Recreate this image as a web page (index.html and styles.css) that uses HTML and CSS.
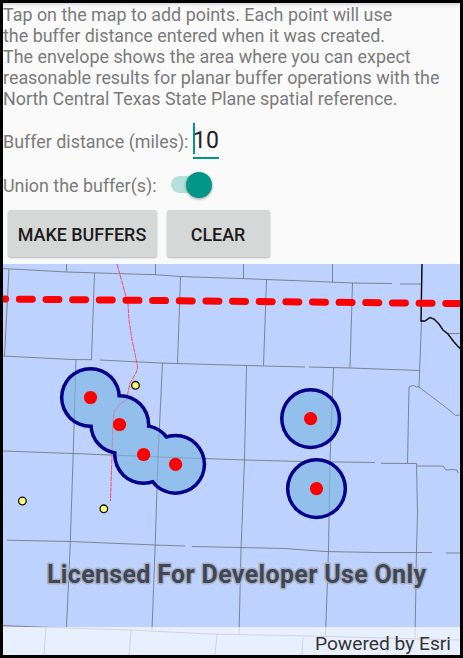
FILE: index.html
```html
<!DOCTYPE html>
<html lang="en">
<head>
<meta charset="utf-8">
<title>Planar buffers</title>
<link rel="stylesheet" href="styles.css">
</head>
<body>
<main class="screen">
  <section class="controls">
    <p class="intro">Tap on the map to add points. Each point will use<br>the buffer distance entered when it was created.<br>The envelope shows the area where you can expect<br>reasonable results for planar buffer operations with the<br>North Central Texas State Plane spatial reference.</p>
    <div class="row distance">
      <span class="label">Buffer distance (miles):</span>
      <span class="field">10</span>
    </div>
    <div class="row union">
      <span class="label">Union the buffer(s):</span>
      <span class="switch"><span class="thumb"></span></span>
    </div>
    <div class="buttons">
      <button class="btn make">MAKE BUFFERS</button>
      <button class="btn clear">CLEAR</button>
    </div>
  </section>
  <section class="map">
    <svg class="canvas" viewBox="3 264 457 391" width="457" height="391">
      <defs>
        <g id="counties">
          <path d="M3 268.5L67 272L155 274.7L180 276.5L245 278.7L310 281.2L352 283L392 283.5M400 284H421"/>
          <path d="M66.5 264V271.5M155.5 264V274.5M243.5 264V278.5M332.5 264V282"/>
          <path d="M9 269L4.5 356M94.5 273L91.5 359.5M180.5 277L177.5 363.5M266.5 280L263.5 365.5M352.5 283L350 368M421.5 321L419 387"/>
          <path d="M3 356L72 359.5L92 359.7M100 360L160 363L246 365.5L305 367M309 367L351 368L420 370.5"/>
          <path d="M76 360L73.2 454L70 550L66.5 627L66 628M162.5 363L158 457L155 550L152 630M246.5 366L244.5 460L241 550L239 635M333.5 368L330 461L328.5 550L325.5 636"/>
          <path d="M3 451L73 453.5L160 457L245 460L303 461.5L375 462.5M381 463.3L416.5 463.5L417.5 513L416.5 550L415 638M417 466H443L446 470L452 469.5L457 470L458 473"/>
          <path d="M7 540.2L70 541.5L155 545L185 546M192 546.5L241 547.5L285 548.5L325 551.5L375 552.5H432M446 553H460"/>
          <path d="M3 625.5L45 627.3L130 630L210 634L310 636L460 640M46 627L44 655M131 630L129 655M217 634L215 655M303 637L302 655M388 640L387 655"/>
          <path d="M407.5 463L409 387L411 386L414 385.5L416 387H419L448 409L455.5 415.5L460 415M448 333.5H460"/>
        </g>
        <path id="road" d="M117 264L128 304L129 320L132 340L137.7 367L136 373L130 383L127.5 395L126.5 400L120 404L114 412L112.5 430L112 455L110.5 501"/>
        <clipPath id="inside">
          <circle cx="90.5" cy="397.5" r="27.1"/><circle cx="119.8" cy="424.5" r="27.1"/>
          <circle cx="143.6" cy="454.5" r="27.1"/><circle cx="175.6" cy="464.3" r="27.1"/>
          <circle cx="310.6" cy="418.6" r="27.1"/><circle cx="316.5" cy="488.6" r="27.1"/>
        </clipPath>
      </defs>
      <rect class="land" x="3" y="264" width="457" height="391"/>
      <use class="county" href="#counties"/>
      <path class="state" d="M422 264L421 321H425L430 317.5L434 319L439 324L443 330L448 334L454 342L460 348.5"/>
      <use class="road" href="#road"/>
      <g class="outline">
        <circle cx="90.5" cy="397.5" r="30.6"/><circle cx="119.8" cy="424.5" r="30.6"/>
        <circle cx="143.6" cy="454.5" r="30.6"/><circle cx="175.6" cy="464.3" r="30.6"/>
        <circle cx="310.6" cy="418.6" r="30.6"/><circle cx="316.5" cy="488.6" r="30.6"/>
      </g>
      <g clip-path="url(#inside)">
        <rect class="fill" x="50" y="360" width="310" height="170"/>
        <use class="county faint" href="#counties"/>
        <use class="road faint" href="#road"/>
      </g>
      <path class="envelope" d="M-7.3 298.9L465 303.6"/>
      <g class="city">
        <circle cx="135.5" cy="385.3" r="3.8"/><circle cx="22.4" cy="501" r="3.8"/><circle cx="103.8" cy="508.8" r="3.8"/>
      </g>
      <g class="point">
        <circle cx="90.5" cy="397.5" r="6.6"/><circle cx="119.5" cy="424.5" r="6.6"/>
        <circle cx="143.6" cy="454.5" r="6.6"/><circle cx="175.6" cy="464.3" r="6.6"/>
        <circle cx="310.6" cy="418.6" r="6.6"/><circle cx="316.5" cy="488.6" r="6.6"/>
      </g>
      <text class="license" x="47" y="582.5" textLength="379">Licensed For Developer Use Only</text>
    </svg>
    <div class="attribution">Powered by Esri</div>
  </section>
</main>
</body>
</html>
```
FILE: styles.css
```css
* { box-sizing: border-box; }
body {
  margin: 0;
  background: #000;
  font-family: Roboto, "Liberation Sans", sans-serif;
}
.screen {
  width: 463px;
  height: 658px;
  padding: 3px;
  background: #000;
}
.controls {
  height: 261px;
  overflow: hidden;
  background: linear-gradient(#d8d8d8, #f4f4f4 3px, #fafafa 6px);
}
.intro {
  margin: 1px 0 0;
  font-size: 17.9px;
  line-height: 21px;
  color: #7a7a7a;
  white-space: nowrap;
}
.row { display: flex; white-space: nowrap; }
.label { font-size: 17.9px; line-height: 21px; color: #7a7a7a; }
.distance { height: 46px; margin-top: 11px; }
.distance .label { width: 190px; padding-top: 11px; }
.field {
  width: 26px;
  height: 39px;
  padding-top: 7px;
  border-bottom: 2px solid #009688;
  background: linear-gradient(#009688, #009688) 0 3px / 2px 31px no-repeat;
  font-size: 23px;
  line-height: 27px;
  color: #222;
}
.union { height: 42px; }
.union .label { width: 168px; padding-top: 9px; }
.switch {
  width: 38px;
  height: 17px;
  margin-top: 10px;
  border-radius: 9px;
  background: #b5e0dc;
  display: flex;
  justify-content: flex-end;
  align-items: center;
}
.thumb {
  flex: none;
  width: 26px;
  height: 26px;
  margin-right: -3px;
  border-radius: 50%;
  background: #009688;
  box-shadow: 0 1px 3px rgba(0, 0, 0, .4);
}
.buttons { display: flex; gap: 10px; padding: 2px 4.5px; }
.btn {
  height: 47px;
  padding: 1px 0 0;
  border: 0;
  border-radius: 3px;
  background: #d6d7d7;
  box-shadow: 0 1px 2px rgba(0, 0, 0, .28);
  font: 500 17.9px Roboto, sans-serif;
  color: #1c1c1c;
  white-space: nowrap;
}
.make { width: 149px; }
.clear { width: 103px; }
.map {
  position: relative;
  height: 391px;
  overflow: hidden;
}
.canvas { display: block; }
.land { fill: #bed2ff; }
.county { fill: none; stroke: #777b80; stroke-width: .9; }
.state { fill: none; stroke: #000; stroke-width: 1.4; }
.road { fill: none; stroke: #ff3b55; stroke-width: .9; stroke-dasharray: 5 .7; }
.outline { fill: #00008b; }
.fill { fill: #92bfec; }
.faint { opacity: .5; }
.envelope {
  fill: none;
  stroke: #f00;
  stroke-width: 7;
  stroke-linecap: round;
  stroke-dasharray: 13 13.65;
}
.city { fill: #ffff73; stroke: #111; stroke-width: 1.3; }
.point { fill: #f00; }
.license {
  font-size: 25px;
  font-weight: 700;
  fill: #3e4759;
  stroke: #aab0bd;
  stroke-width: 3px;
  stroke-linejoin: round;
  paint-order: stroke;
}
.attribution {
  position: absolute;
  inset: auto 0 0;
  height: 28px;
  padding-right: 9px;
  background: rgba(255, 255, 255, .65);
  font-size: 19.2px;
  line-height: 34px;
  text-align: right;
  color: #333;
}
```
